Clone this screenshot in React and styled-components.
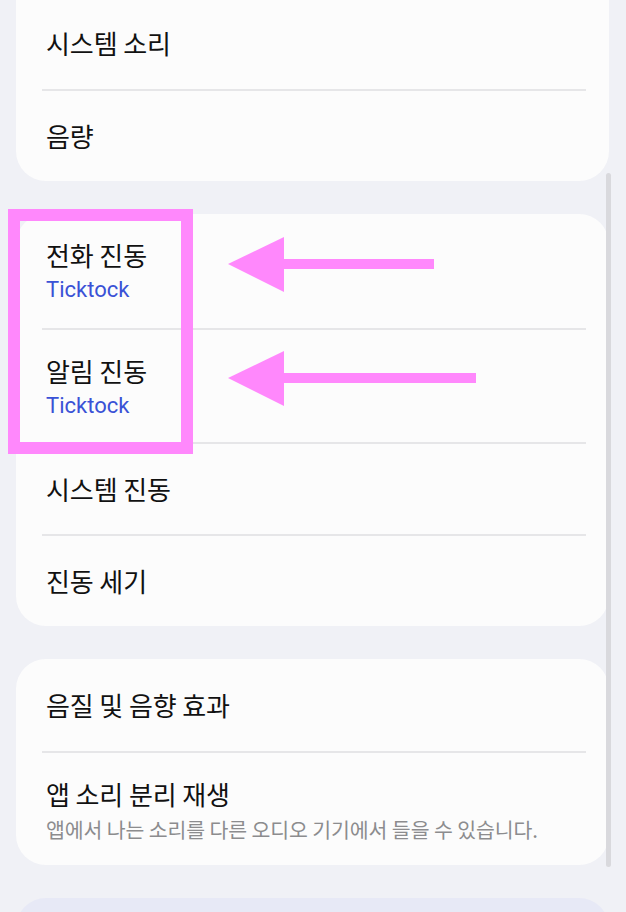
import React from 'react';
import styled, { createGlobalStyle } from 'styled-components';

const GlobalStyle = createGlobalStyle`
  html, body {
    margin: 0;
    padding: 0;
    background: #f0f1f6;
    overflow: hidden;
  }
  * { box-sizing: border-box; }
`;

const Screen = styled.div`
  position: relative;
  width: 626px;
  height: 912px;
  overflow: hidden;
  background: #f0f1f6;
  font-family: "Noto Sans CJK KR", "Noto Sans", sans-serif;
`;

const List = styled.div`
  display: flex;
  flex-direction: column;
  gap: 33px;
  margin-top: -3px;
  padding: 0 17px 0 16px;
`;

const Card = styled.section`
  background: ${(p) => (p.$tinted ? '#e7e9f6' : '#fcfcfc')};
  border-radius: ${(p) => (p.$cutTop ? '0 0 30px 30px' : '30px')};
  padding: 0 23px 0 26px;
  min-height: ${(p) => p.$minHeight || 0}px;
`;

const Row = styled.div`
  display: flex;
  flex-direction: column;
  justify-content: ${(p) => (p.$double ? 'flex-start' : 'center')};
  gap: 4px;
  height: ${(p) => (p.$double ? 114 : 92)}px;
  padding: ${(p) => (p.$double ? '24px 0 0 4px' : '0 0 0 4px')};
  border-top: ${(p) => (p.$first ? 'none' : '2px solid #e6e6e8')};
`;

const Title = styled.div`
  font-size: 26px;
  line-height: 34px;
  color: #111111;
  letter-spacing: -0.1px;
`;

const Value = styled.div`
  font-family: Roboto, "Noto Sans", sans-serif;
  font-size: 22px;
  line-height: 28px;
  color: #3a52d6;
`;

const Hint = styled.div`
  font-size: 20.5px;
  line-height: 28px;
  color: #8c8c8e;
  letter-spacing: -0.1px;
`;

const Scrollbar = styled.div`
  position: absolute;
  left: 606px;
  top: 173px;
  width: 5px;
  height: 694px;
  border-radius: 3px;
  background: #d9d9dd;
`;

const Markup = styled.svg`
  position: absolute;
  left: 0;
  top: 0;
  pointer-events: none;
`;

const SettingRow = ({ title, value, hint, first }) => (
  <Row $first={first} $double={!!(value || hint)}>
    <Title>{title}</Title>
    {value && <Value>{value}</Value>}
    {hint && <Hint>{hint}</Hint>}
  </Row>
);

const PINK = '#ff88fc';

const Arrow = ({ y, end }) => (
  <g fill={PINK}>
    <polygon points={`228,${y} 284,${y - 27} 284,${y + 28}`} />
    <rect x="283" y={y - 5} width={end - 283} height="10" />
  </g>
);

const App = () => {
  return (
    <Screen>
      <GlobalStyle />
      <List>
        <Card $cutTop>
          <SettingRow first title="시스템 소리" />
          <SettingRow title="음량" />
        </Card>
        <Card>
          <SettingRow first title="전화 진동" value="Ticktock" />
          <SettingRow title="알림 진동" value="Ticktock" />
          <SettingRow title="시스템 진동" />
          <SettingRow title="진동 세기" />
        </Card>
        <Card>
          <SettingRow first title="음질 및 음향 효과" />
          <SettingRow
            title="앱 소리 분리 재생"
            hint="앱에서 나는 소리를 다른 오디오 기기에서 들을 수 있습니다."
          />
        </Card>
        <Card $tinted $minHeight={120} />
      </List>
      <Scrollbar />
      <Markup width="626" height="912" viewBox="0 0 626 912">
        <rect x="14" y="215" width="173" height="233" fill="none" stroke={PINK} strokeWidth="12" />
        <Arrow y={264} end={434} />
        <Arrow y={378} end={476} />
      </Markup>
    </Screen>
  );
};

export default App;
